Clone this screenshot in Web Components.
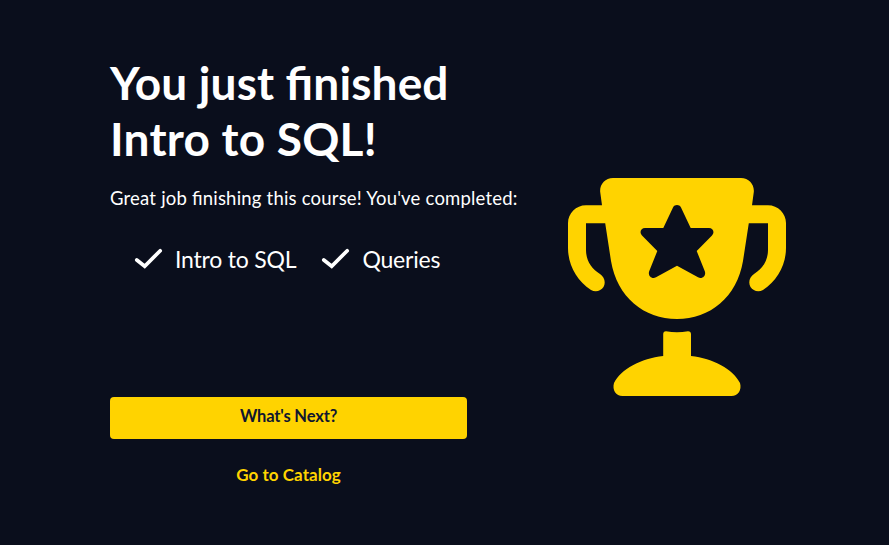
<!DOCTYPE html>
<html lang="en">
<head>
<meta charset="utf-8">
<title>Course complete</title>
<style>
html, body { margin: 0; height: 100%; }
body { background: #0a0e1c; color: #fff; font-family: Lato, "Open Sans", sans-serif; overflow: hidden; }
</style>
</head>
<body>
<course-complete></course-complete>
<script>
const define = (name, html) => customElements.define(name, class extends HTMLElement {
  constructor() {
    super();
    const t = document.createElement('template');
    t.innerHTML = html;
    this.attachShadow({ mode: 'open' }).append(t.content.cloneNode(true));
  }
});

define('check-item', `
<style>
:host { display: flex; align-items: center; gap: 12px; height: 32px; font-size: 23px; line-height: 32px; letter-spacing: -0.2px; white-space: nowrap; }
svg { display: block; flex: none; margin-top: -1px; }
span { margin-top: -1px; }
</style>
<svg width="29" height="21" viewBox="0 0 29 21" fill="none" stroke="#fff" stroke-width="3.7" stroke-linecap="round" stroke-linejoin="miter"><path d="M2.800 12 L10.700 18.200 L26.200 2.700"/></svg>
<span><slot></slot></span>`);

define('action-button', `
<style>
:host { display: block; }
button { display: block; width: 100%; height: 42px; margin: 0; padding: 0 0 var(--lift, 5px); border: 0; border-radius: 4px; background: #ffd300; color: #10162f; font: 700 var(--size, 17px)/37px Lato, sans-serif; letter-spacing: var(--track, 0); }
:host([plain]) button { background: none; color: #ffd300; }
</style>
<button><slot></slot></button>`);

define('trophy-icon', `
<style>
:host { display: block; width: 218px; height: 218px; }
svg { display: block; }
</style>
<svg width="218" height="218" viewBox="568 178 218 218" fill="#ffd300">
<path fill-rule="evenodd" d="M613 178H741C749 178 754.500 184.500 753.800 192L752 205.300H768C778 205.300 786 213.500 786 223V248C786 265 777 281 763 290C758.500 292.500 753 291 750.500 287C748 282.500 749.500 277 754 274C763 268.500 768 260 768 250V223.300H748.800L743 261C737 297 710 319 677 319C644 319 617 297 611 261L605.200 223.300H586V250C586 260 591 268.500 600 274C604.500 277 606 282.500 603.500 287C601 291 595.500 292.500 591 290C577 281 568 265 568 248V223C568 213.500 576 205.300 586 205.300H602L600.200 192C599.500 184.500 605 178 613 178Z
M673 207.500L663.300 228H645C641 228 639 232 642 235.500L657.300 251L649.300 271C647.500 275.500 651.500 279.500 656 277.300L677 265.700L698 277.300C702.500 279.500 706.500 275.500 704.700 271L696.700 251L712 235.500C715 232 713 228 709 228H690.700L681 207.500C679.300 204.300 674.700 204.300 673 207.500Z"/>
<path d="M666 331.200Q677 333.300 688 331.200Q691 331.200 691 334.200V356C713 358.500 733 369 740 383C742 390 738 396 731.500 396H622.500C616 396 612 390 614 383C621 369 641 358.500 663.200 356V334.200Q663.200 331.200 666 331.200Z"/>
</svg>`);

define('course-complete', `
<style>
:host { display: grid; grid-template-columns: 458px 218px; height: 545px; box-sizing: border-box; padding: 55px 0 0 110px; }
.copy { display: flex; flex-direction: column; }
h1 { margin: 0; font-size: 46px; line-height: 56px; font-weight: 700; font-feature-settings: "liga" 1; white-space: nowrap; }
h1 span { display: block; }
.l1 { letter-spacing: 0.14px; }
.l2 { letter-spacing: 0.23px; }
p { margin: 17px 0 0; font-size: 18.500px; line-height: 28px; letter-spacing: 0.2px; font-feature-settings: "liga" 1; white-space: nowrap; }
.checks { display: flex; gap: 25px; margin: 31px 0 0 24px; }
.actions { width: 357px; margin-top: 122px; display: grid; gap: 17px; }
.next { --size: 16.500px; --track: -0.15px; --lift: 3px; }
.catalog { --track: 0.05px; }
trophy-icon { margin-top: 123px; }
</style>
<div class="copy">
<h1><span class="l1">You just finished</span><span class="l2">Intro to SQL!</span></h1>
<p>Great job finishing this course! You've completed:</p>
<div class="checks"><check-item>Intro to SQL</check-item><check-item>Queries</check-item></div>
<div class="actions"><action-button class="next">What's Next?</action-button><action-button class="catalog" plain>Go to Catalog</action-button></div>
</div>
<trophy-icon></trophy-icon>`);
</script>
</body>
</html>
